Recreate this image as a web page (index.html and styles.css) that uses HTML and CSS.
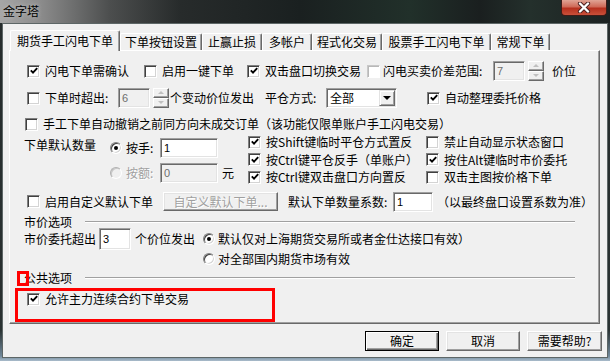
FILE: index.html
```html
<!DOCTYPE html>
<html lang="zh-CN">
  <head>
    <meta charset="UTF-8" />
    <title>金字塔</title>
    <link rel="stylesheet" href="styles.css">
  </head>
  <body>
    <div class="window">
      <div class="titlebar">
        <span class="title">金字塔</span>
        <span class="close-btn">
          <svg width="14" height="11" viewBox="0 0 14 11">
            <path d="M3 1.5 L11 9.5 M11 1.5 L3 9.5" stroke="#4a2020" stroke-width="4.2" stroke-linecap="round" />
            <path d="M3 1.5 L11 9.5 M11 1.5 L3 9.5" stroke="#fff" stroke-width="2.4" stroke-linecap="round" />
          </svg>
        </span>
      </div>

      <div class="client">
        <!-- tab strip -->
        <div class="tabs">
          <div class="tab active">期货手工闪电下单</div>
          <div class="tab t2">下单按钮设置</div>
          <div class="tab t3">止赢止损</div>
          <div class="tab t4">多帐户</div>
          <div class="tab t5">程式化交易</div>
          <div class="tab t6">股票手工闪电下单</div>
          <div class="tab t7">常规下单</div>
        </div>

        <div class="panel">
          <div class="row r1">
            <label class="chk"><span class="cb"><svg viewBox="0 0 8 8"><path d="M0.8 3.4 L3 5.6 L7.2 1.2" /></svg></span>闪电下单需确认</label>
            <label class="chk"><span class="cb"></span>启用一键下单</label>
            <label class="chk"><span class="cb"><svg viewBox="0 0 8 8"><path d="M0.8 3.4 L3 5.6 L7.2 1.2" /></svg></span>双击盘口切换交易</label>
            <label class="chk tight"><span class="cb faint"></span>闪电买卖价差范围:</label>
            <span class="field off">7</span>
            <span class="spin"><i></i><i></i></span>
            <span class="txt pad4">价位</span>
          </div>

          <div class="row r2">
            <label class="chk"><span class="cb"></span>下单时超出:</label>
            <span class="field off">6</span>
            <span class="spin"><i></i><i></i></span>
            <span class="txt">个变动价位发出</span>
            <span class="txt">平仓方式:</span>
            <span class="select"><span class="val">全部</span><span class="arrow"></span></span>
            <span></span>
            <label class="chk"><span class="cb"><svg viewBox="0 0 8 8"><path d="M0.8 3.4 L3 5.6 L7.2 1.2" /></svg></span>自动整理委托价格</label>
          </div>

          <div class="row r3">
            <label class="chk"><span class="cb"></span>手工下单自动撤销之前同方向未成交订单（该功能仅限单账户手工闪电交易）</label>
          </div>

          <div class="qty-block">
            <div class="qty-label">下单默认数量</div>
            <div class="qty-opts">
              <div class="opt">
                <label class="rad"><span class="rb on"></span>按手:</label>
                <span class="field">1</span>
              </div>
              <div class="opt">
                <label class="rad dis"><span class="rb off"></span>按额:</label>
                <span class="field off">0</span>
                <span class="txt pad4">元</span>
              </div>
            </div>
            <div class="opts-right">
              <label class="chk"><span class="cb"><svg viewBox="0 0 8 8"><path d="M0.8 3.4 L3 5.6 L7.2 1.2" /></svg></span>按Shift键临时平仓方式置反</label>
              <label class="chk"><span class="cb"></span>禁止自动显示状态窗口</label>
              <label class="chk"><span class="cb"><svg viewBox="0 0 8 8"><path d="M0.8 3.4 L3 5.6 L7.2 1.2" /></svg></span>按Ctrl键平仓反手（单账户）</label>
              <label class="chk"><span class="cb"><svg viewBox="0 0 8 8"><path d="M0.8 3.4 L3 5.6 L7.2 1.2" /></svg></span>按住Alt键临时市价委托</label>
              <label class="chk"><span class="cb"><svg viewBox="0 0 8 8"><path d="M0.8 3.4 L3 5.6 L7.2 1.2" /></svg></span>按Ctrl键双击盘口方向置反</label>
              <label class="chk"><span class="cb"></span>双击主图按价格下单</label>
            </div>
          </div>

          <div class="row r7">
            <label class="chk"><span class="cb"></span>启用自定义默认下单</label>
            <span class="btn-off">自定义默认下单...</span>
            <span class="txt pad10">默认下单数量系数:</span>
            <span class="field">1</span>
            <span class="txt pad4">（以最终盘口设置系数为准）</span>
          </div>

          <div class="group">
            <span class="group-name">市价选项</span>
            <span class="group-line"></span>
          </div>

          <div class="row r8">
            <span class="txt">市价委托超出</span>
            <span class="field tall">3</span>
            <span class="txt pad4">个价位发出</span>
            <label class="rad r-gap"><span class="rb on"></span>默认仅对上海期货交易所或者金仕达接口有效）</label>
          </div>

          <div class="row r9">
            <label class="rad r-gap"><span class="rb"></span>对全部国内期货市场有效</label>
          </div>

          <div class="group g2">
            <span class="group-name">公共选项</span>
            <span class="group-line"></span>
          </div>

          <div class="row r10">
            <label class="chk"><span class="cb"><svg viewBox="0 0 8 8"><path d="M0.8 3.4 L3 5.6 L7.2 1.2" /></svg></span>允许主力连续合约下单交易</label>
          </div>
        </div>

        <div class="buttons">
          <span class="btn default">确定</span>
          <span class="btn">取消</span>
          <span class="btn">需要帮助?</span>
        </div>
      </div>

      <!-- red annotation marks -->
      <div class="mark mark-small"></div>
      <div class="mark mark-box"></div>
    </div>
  </body>
</html>
```

FILE: styles.css
```css
/* Reset */
* {
  margin: 0;
  padding: 0;
  box-sizing: border-box;
}

body {
  background-color: #1d2323;
  font-family: "Noto Sans CJK SC", "Noto Sans", sans-serif;
  font-size: 12px;
  line-height: 16px;
  color: #000;
}

/* Window frame */
.window {
  position: relative;
  width: 610px;
  height: 361px;
  overflow: hidden;
  background: linear-gradient(180deg, #262c2c 0, #2a3232 330px, #6f8799 356px, #a9bccb 361px);
}

.titlebar {
  display: flex;
  justify-content: space-between;
  align-items: flex-start;
  height: 23px;
  background: linear-gradient(90deg, #a6a6a6 0, #8c8c8c 40px, #4c4e4e 110px, #272b2b 180px, #1a2020 300px, #21302a 410px, #1a1f1f 480px, #24302c 530px, #1c2222 610px);
}

.title {
  padding-left: 3px;
  line-height: 21px;
  font-size: 12px;
  color: #000;
  text-shadow: 0 0 4px #c8c8c8;
}

.close-btn {
  display: flex;
  align-items: center;
  justify-content: center;
  width: 46px;
  height: 16px;
  margin-right: 3px;
  border: 1px solid #3e1c18;
  border-top: none;
  border-radius: 0 0 4px 4px;
  background: linear-gradient(180deg, #e0a495 0, #cf6a58 45%, #b6301e 55%, #c9503a 100%);
}

/* Client area */
.client {
  width: 606px;
  height: 335px;
  margin-left: 2px;
  background-color: #f0f0f0;
  border: 1px solid #5d6666;
}

/* Tabs */
.tabs {
  display: flex;
  align-items: flex-end;
  height: 20px;
  margin: 6px 0 0 7px;
}

.tab {
  height: 17px;
  line-height: 15px;
  text-align: center;
  white-space: nowrap;
  background-color: #f0f0f0;
  border-left: 1px solid #fff;
  border-top: 1px solid #fff;
  border-right: 1px solid #696969;
  border-radius: 2px 2px 0 0;
  box-shadow: inset -1px 0 #a0a0a0;
}

.tab.active {
  position: relative;
  z-index: 2;
  width: 110px;
  height: 21px;
  line-height: 19px;
  margin-bottom: -1px;
}

.t2 { width: 82px; }
.t3 { width: 60px; }
.t4 { width: 50px; }
.t5 { width: 70px; }
.t6 { width: 109px; }
.t7 { width: 59px; }

.panel {
  width: 591px;
  height: 274px;
  margin-left: 6px;
  border-left: 1px solid #fff;
  border-top: 1px solid #fff;
  border-right: 1px solid #696969;
  border-bottom: 1px solid #696969;
  box-shadow: inset -1px -1px #a0a0a0;
}

/* Rows */
.row {
  display: grid;
  align-items: center;
  white-space: nowrap;
}

.r1 {
  grid-template-columns: 117px 103px 120px 126px 32px 23px auto;
  height: 20px;
  margin-top: 10px;
  padding-left: 17px;
}

.r2 {
  grid-template-columns: 91px 32px 20px 95px 61px 71px 30px auto;
  height: 22px;
  margin-top: 6px;
  padding-left: 17px;
}

.r3 {
  height: 16px;
  margin-top: 7px;
  padding-left: 15px;
}

.r7 {
  grid-template-columns: 136px 115px 115px 40px auto;
  height: 21px;
  margin-top: 5px;
  padding-left: 17px;
}

.r8 {
  grid-template-columns: 75px 32px 72px auto;
  height: 22px;
  padding-left: 14px;
}

.r9 {
  height: 18px;
  padding-left: 193px;
}

.r10 {
  height: 18px;
  margin-top: 6px;
  padding-left: 17px;
}

.pad4 { padding-left: 4px; }
.pad10 { padding-left: 10px; }

/* Quantity block */
.qty-block {
  display: flex;
  height: 53px;
  margin-top: 1px;
  white-space: nowrap;
}

.qty-label {
  width: 100px;
  padding-left: 14px;
  margin-top: 4px;
}

.qty-opts {
  width: 138px;
}

.opt {
  display: grid;
  grid-template-columns: 50px 58px auto;
  align-items: center;
  height: 20px;
  margin-top: 5px;
}

.opts-right {
  display: grid;
  grid-template-columns: 178px auto;
  grid-template-rows: 18px 17px 18px;
  align-items: center;
}

/* Group headers */
.group {
  display: flex;
  align-items: center;
  height: 12px;
  line-height: 12px;
  margin-top: 4px;
  padding: 0 24px 0 14px;
}

.group-line {
  flex: 1;
  height: 2px;
  margin-left: 13px;
  border-top: 1px solid #a0a0a0;
  border-bottom: 1px solid #fff;
}

/* Checkbox */
.chk {
  display: flex;
  align-items: center;
  gap: 5px;
}

.chk.tight {
  gap: 3px;
}

.cb {
  display: flex;
  align-items: center;
  justify-content: center;
  flex: none;
  width: 13px;
  height: 13px;
  background-color: #fff;
  border: 1px solid;
  border-color: #808080 #fff #fff #808080;
  box-shadow: inset 1px 1px #404040, inset -1px -1px #d4d4d4;
}

.cb.faint {
  border-color: #c8c8c8 #fff #fff #c8c8c8;
  box-shadow: inset 1px 1px #b8b8b8;
}

.cb svg {
  width: 8px;
  height: 8px;
}

.cb path {
  fill: none;
  stroke: #000;
  stroke-width: 1.9;
}

/* Radio */
.rad {
  display: flex;
  align-items: center;
  gap: 4px;
}

.rad.r-gap {
  gap: 3px;
}

.rad.dis {
  color: #a0a0a0;
  text-shadow: 1px 1px #fff;
}

.rb {
  position: relative;
  flex: none;
  width: 12px;
  height: 12px;
  border-radius: 50%;
  background-color: #fff;
  border: 1px solid;
  border-color: #808080 #fff #fff #808080;
  box-shadow: inset 1px 1px #404040, inset -1px -1px #d4d4d4;
}

.rb.off {
  background-color: #f0f0f0;
  border-color: #b0b0b0 #fff #fff #b0b0b0;
  box-shadow: inset 1px 1px #c8c8c8;
}

.rb.on::after {
  content: "";
  position: absolute;
  left: 3px;
  top: 3px;
  width: 4px;
  height: 4px;
  border-radius: 50%;
  background-color: #000;
}

/* Edit fields */
.field {
  display: block;
  height: 20px;
  padding-left: 3px;
  font-family: "Liberation Sans", sans-serif;
  font-size: 11px;
  line-height: 18px;
  background-color: #fff;
  border: 1px solid;
  border-color: #a0a0a0 #fff #fff #a0a0a0;
  box-shadow: inset 1px 1px #696969, inset -1px -1px #e3e3e3;
}

.field.off {
  background-color: #f0f0f0;
  color: #6d6d6d;
}

.field.tall {
  height: 22px;
  line-height: 20px;
}

/* Spinner */
.spin {
  display: flex;
  flex-direction: column;
  width: 16px;
  height: 20px;
  margin-left: 3px;
}

.spin i {
  position: relative;
  height: 10px;
  background-color: #f0f0f0;
  border: 1px solid;
  border-color: #fff #696969 #696969 #fff;
  box-shadow: inset -1px -1px #a0a0a0;
}

.spin i::after {
  content: "";
  position: absolute;
  left: 4px;
  top: 2px;
  border-left: 3px solid transparent;
  border-right: 3px solid transparent;
  border-bottom: 3px solid #c0c0c0;
}

.spin i + i::after {
  border-bottom: none;
  border-top: 3px solid #c0c0c0;
}

/* Combo box */
.select {
  display: flex;
  align-items: center;
  height: 20px;
  padding: 1px;
  background-color: #fff;
  border: 1px solid;
  border-color: #a0a0a0 #fff #fff #a0a0a0;
  box-shadow: inset 1px 1px #696969, inset -1px -1px #e3e3e3;
}

.select .val {
  flex: 1;
  padding-left: 2px;
}

.select .arrow {
  position: relative;
  width: 16px;
  height: 16px;
  background-color: #f0f0f0;
  border: 1px solid;
  border-color: #e3e3e3 #696969 #696969 #e3e3e3;
  box-shadow: inset 1px 1px #fff, inset -1px -1px #a0a0a0;
}

.select .arrow::after {
  content: "";
  position: absolute;
  left: 3px;
  top: 5px;
  border-left: 4px solid transparent;
  border-right: 4px solid transparent;
  border-top: 4px solid #000;
}

/* Buttons */
.btn-off {
  display: block;
  height: 19px;
  line-height: 17px;
  text-align: center;
  color: #a0a0a0;
  text-shadow: 1px 1px #fff;
  border: 1px solid;
  border-color: #fff #696969 #696969 #fff;
  box-shadow: inset -1px -1px #a0a0a0, inset 1px 1px #e3e3e3;
}

.buttons {
  display: flex;
  justify-content: flex-end;
  gap: 7px;
  margin-top: 7px;
  padding-right: 5px;
}

.btn {
  width: 74px;
  height: 20px;
  line-height: 18px;
  text-align: center;
  background-color: #f0f0f0;
  border: 1px solid;
  border-color: #fff #696969 #696969 #fff;
  box-shadow: inset -1px -1px #a0a0a0, inset 1px 1px #e3e3e3;
}

.btn:last-child {
  width: 75px;
}

.btn.default {
  border: 1px solid #000;
  box-shadow: inset 1px 1px #fff, inset -1px -1px #696969, inset -2px -2px #a0a0a0;
}

/* Red annotation marks */
.mark {
  position: absolute;
  border: 3px solid #ff0000;
}

.mark-small {
  left: 17px;
  top: 271px;
  width: 12px;
  height: 15px;
}

.mark-box {
  left: 15px;
  top: 288px;
  width: 260px;
  height: 34px;
}
```
